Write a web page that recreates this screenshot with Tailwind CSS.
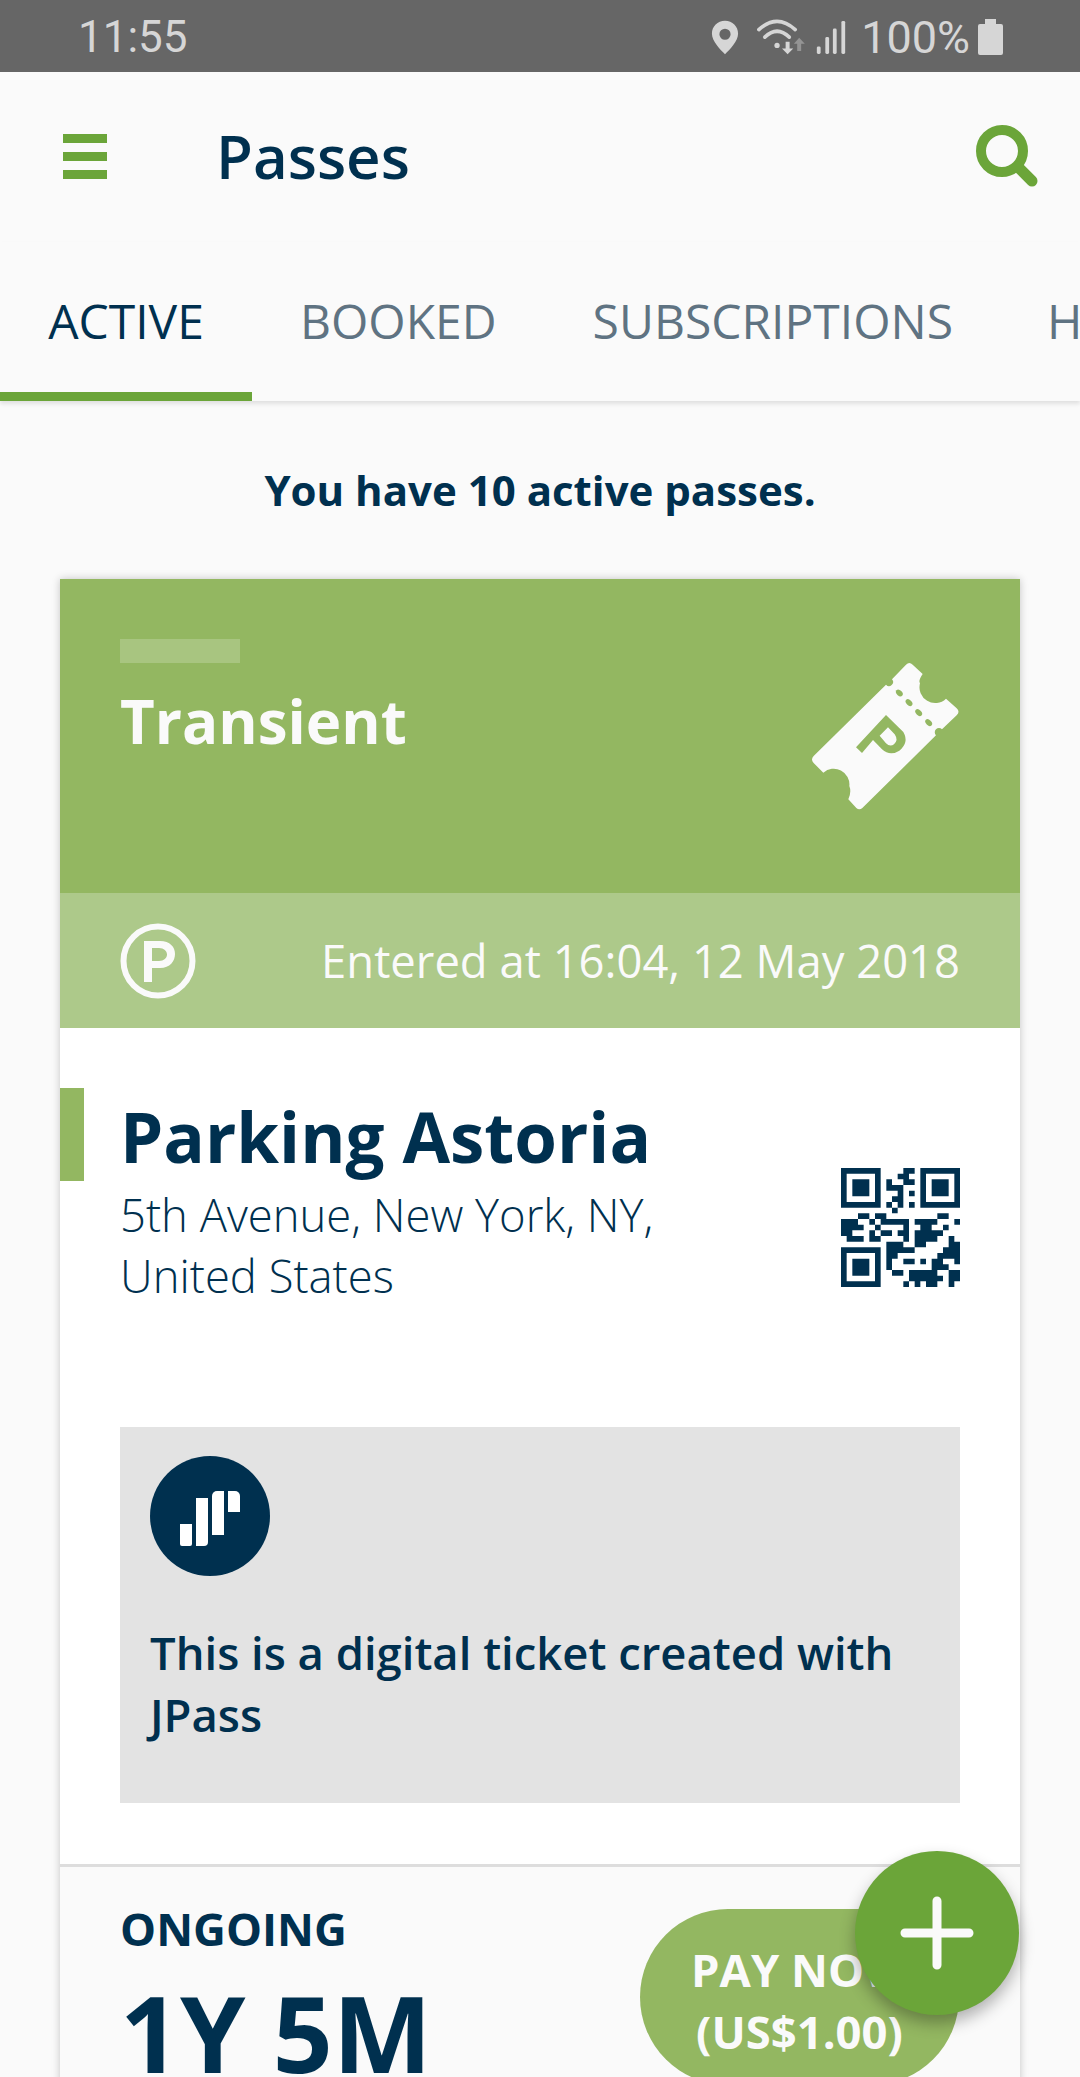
<!DOCTYPE html>
<html lang="en">
<head>
    <meta charset="UTF-8">
    <meta name="viewport" content="width=device-width, initial-scale=1.0">
    <title>Passes</title>
    <script src="https://cdn.jsdelivr.net/npm/@tailwindcss/browser@4"></script>
</head>
<body class="relative h-[2077px] w-[1080px] overflow-hidden bg-[#fafafa] font-['Open_Sans',sans-serif] text-[#00304f]">
    <!-- status bar -->
    <div class="flex h-[72px] items-center justify-between bg-[#666666] pl-[78px] pr-[77px] pt-[2px] font-['Roboto',sans-serif] text-[#d6d6d6]">
        <span class="text-[44px] font-normal leading-none">11:55</span>
        <div class="flex items-center">
            <svg width="28" height="35" viewBox="0 0 30 36" class="mr-[18px]">
                <path fill-rule="evenodd" fill="#d6d6d6" d="M15 0C7 0 1 6 1 14c0 8 9 17 14 22 5-5 14-14 14-22C29 6 23 0 15 0zm0 8.500a6 6 0 1 1 0 12 6 6 0 0 1 0-12z"/>
            </svg>
            <svg width="50" height="38" viewBox="235 50 150 115" class="mr-[8px]">
                <g fill="none" stroke="#d6d6d6" stroke-width="11" stroke-linecap="round">
                    <path d="M240 85Q295 35 350 85"/>
                    <path d="M258 108Q295 72 332 108"/>
                </g>
                <circle cx="295" cy="133" r="8" fill="#d6d6d6"/>
                <path d="M321 122h12v20h11l-17 18-17-18h11z" fill="#d6d6d6"/>
                <path d="M356 150v-22h-10l16-18 17 18h-11v22z" fill="#949494"/>
            </svg>
            <svg width="32" height="34" viewBox="0 0 32 36" class="mr-[14px]">
                <rect x="1" y="28" width="4" height="8" rx="1.500" fill="#d6d6d6"/>
                <rect x="10" y="18" width="4" height="18" rx="1.500" fill="#d6d6d6"/>
                <rect x="18" y="9" width="4" height="27" rx="1.500" fill="#d6d6d6"/>
                <rect x="27" y="1" width="4" height="35" rx="1.500" fill="#d6d6d6"/>
            </svg>
            <span class="text-[45px] font-normal leading-none">100%</span>
            <svg width="25" height="36" viewBox="0 0 25 36" class="ml-[8px]">
                <path d="M7 0h11v5h5a2 2 0 0 1 2 2v27a2 2 0 0 1-2 2H2a2 2 0 0 1-2-2V7a2 2 0 0 1 2-2h5z" fill="#d6d6d6"/>
            </svg>
        </div>
    </div>

    <!-- toolbar -->
    <header class="flex h-[170px] items-center pb-[2px] pl-[63px] pr-[42px]">
        <div class="flex w-[44px] flex-col gap-[9px]">
            <div class="h-[9px] bg-[#6ba539]"></div>
            <div class="h-[9px] bg-[#6ba539]"></div>
            <div class="h-[9px] bg-[#6ba539]"></div>
        </div>
        <h1 class="ml-[109px] text-[60px] font-semibold leading-none">Passes</h1>
        <svg width="62" height="62" viewBox="0 0 62 62" class="ml-auto">
            <circle cx="26" cy="26" r="21" fill="none" stroke="#6ba539" stroke-width="10"/>
            <path d="M42 42L56 56" stroke="#6ba539" stroke-width="11" stroke-linecap="round"/>
        </svg>
    </header>

    <!-- tabs -->
    <nav class="relative flex h-[159px] overflow-hidden bg-[#fafafa] text-[48px] leading-none text-[#5f7382] shadow-[0_3px_4px_rgba(0,0,0,0.1)]">
        <div class="flex w-[252px] shrink-0 items-center justify-center border-b-[9px] border-[#6ba539] pt-[8px] text-[#00304f]">ACTIVE</div>
        <div class="ml-[48px] flex shrink-0 items-center pb-[1px]">BOOKED</div>
        <div class="ml-[96px] flex shrink-0 items-center pb-[1px]">SUBSCRIPTIONS</div>
        <div class="ml-[94px] flex shrink-0 items-center pb-[1px]">HISTORY</div>
    </nav>

    <p class="pt-[62px] text-center text-[42px] font-bold leading-[54px]">You have 10 active passes.</p>

    <!-- pass card -->
    <main class="mx-[60px] mt-[62px] bg-white shadow-[0_0_8px_rgba(0,0,0,0.22)]">
        <section class="flex h-[314px] justify-between bg-[#93b761] pl-[60px] pr-[60px] pt-[60px] text-[#fafafa]">
            <div>
                <div class="h-[24px] w-[120px] bg-white/20"></div>
                <h2 class="mt-[18px] text-[60px] font-bold leading-[80px]">Transient</h2>
            </div>
            <svg width="150" height="150" viewBox="90 60 450 450" class="mt-[21px]">
                <path fill="#fafafa" d="M378 74Q388 64 398 74L428 102Q414 122 420 130A47 47 0 0 0 498 176L530 205Q541 215 530 226L486 268A11 11 0 0 0 468 286L247 504Q238 512 229 504L205 478Q215 456 208 438A47 47 0 0 0 130 398L101 369Q91 358 101 348L318 134A11 11 0 0 0 336 118z"/>
                <g fill="#93b761">
                    <ellipse cx="358" cy="159" rx="12" ry="8" transform="rotate(45 358 159)"/>
                    <ellipse cx="387" cy="188" rx="12" ry="8" transform="rotate(45 387 188)"/>
                    <ellipse cx="416" cy="218" rx="12" ry="8" transform="rotate(45 416 218)"/>
                    <ellipse cx="446" cy="248" rx="12" ry="8" transform="rotate(45 446 248)"/>
                    <path fill-rule="evenodd" d="M228 322L318 225L370 276Q388 308 358 332Q330 350 306 328L279 300L246 339zM299 287L324 262L344 283Q356 300 342 313Q330 322 318 310z"/>
                </g>
            </svg>
        </section>
        <section class="flex h-[135px] items-center justify-between bg-[#adc98a] pl-[60px] pr-[60px] text-[#fafafa]">
            <svg width="76" height="76" viewBox="0 0 76 76">
                <circle cx="38" cy="38" r="34.500" fill="none" stroke="#fafafa" stroke-width="6"/>
                <path fill="#fafafa" fill-rule="evenodd" d="M24 18h16c10 0 15 6 15 13s-5 14-15 14h-8v14h-8zm8 7v13h7c5 0 8-3 8-6.500S44 25 39 25z"/>
            </svg>
            <span class="text-[45.400px] font-normal leading-none">Entered at 16:04, 12 May 2018</span>
        </section>

        <section class="relative h-[399px] pl-[60px] pr-[60px] pt-[64px]">
            <div class="absolute left-0 top-[60px] h-[93px] w-[24px] bg-[#93b761]"></div>
            <div class="flex justify-between">
                <div>
                    <h3 class="text-[69px] font-bold leading-[88px]">Parking Astoria</h3>
                    <p class="mt-[4px] text-[45.400px] font-light leading-[61px]">5th Avenue, New York, NY,<br>United States</p>
                </div>
                <svg width="119" height="119" viewBox="0 0 21 21" class="mt-[76px]" fill="#00304f">
                    <path fill-rule="evenodd" d="M0 0h7v7H0zM1 1v5h5V1zM2 2h3v3H2zM14 0h7v7h-7zM15 1v5h5V1zM16 2h3v3h-3zM0 14h7v7H0zM1 15v5h5v-5zM2 16h3v3H2z"/>
                    <path d="M11 0h2v1h-2zM10 1h2v1h-2zM8 2h1v1H8zM11 2h2v1h-2zM8 3h3v1H8zM10 4h1v1h-1zM12 4h1v1h-1zM9 5h2v1H9zM8 6h1v1H8zM10 6h1v1h-1zM12 6h1v1h-1zM9 7h1v1H9zM3 8h2v1H3zM6 8h2v1H6zM17 8h2v1h-2zM0 9h3v1H0zM5 9h1v1H5zM7 9h5v1H7zM13 9h4v1h-4zM20 9h1v1h-1zM0 10h4v1H0zM6 10h1v1H6zM11 10h1v1h-1zM14 10h2v1h-2zM18 10h1v1h-1zM0 11h2v1H0zM5 11h1v1H5zM7 11h2v1H7zM10 11h2v1h-2zM13 11h5v1h-5zM1 12h3v1H1zM5 12h2v1H5zM11 12h1v1h-1zM13 12h4v1h-4zM19 12h1v1h-1zM8 13h3v1H8zM13 13h2v1h-2zM19 13h2v1h-2zM8 14h5v1H8zM18 14h3v1h-3zM8 15h2v1H8zM17 15h4v1h-4zM8 16h1v1H8zM11 16h2v1h-2zM14 16h1v1h-1zM16 16h2v1h-2zM20 16h1v1h-1zM8 17h1v1H8zM16 17h3v1h-3zM9 18h2v1H9zM12 18h5v1h-5zM19 18h2v1h-2zM12 19h6v1h-6zM19 19h2v1h-2zM11 20h1v1h-1zM13 20h1v1h-1zM15 20h2v1h-2zM19 20h1v1h-1z"/>
                </svg>
            </div>
        </section>

        <section class="mx-[60px] h-[376px] bg-[#e3e3e3] px-[30px] pt-[29px]">
            <svg width="120" height="120" viewBox="0 0 120 120">
                <circle cx="60" cy="60" r="60" fill="#00304f"/>
                <g fill="#ffffff">
                    <path d="M30 68h12v20a2 2 0 0 1-2 2h-8a2 2 0 0 1-2-2z"/>
                    <path d="M46 42h12v44a4 4 0 0 1-4 4h-8z"/>
                    <path d="M62 40a5 5 0 0 1 5-5h7v44H62z"/>
                    <path d="M78 35h7a5 5 0 0 1 5 5v16H78z"/>
                </g>
            </svg>
            <p class="mt-[45px] text-[45.400px] font-semibold leading-[62px]">This is a digital ticket created with JPass</p>
        </section>

        <div class="mt-[61px] h-[3px] bg-[#dddddd]"></div>

        <section class="flex h-[400px] justify-between bg-[#fafafa] pl-[60px] pr-[61px] pt-[31px]">
            <div>
                <p class="text-[45.400px] font-bold leading-[60px]">ONGOING</p>
                <p class="mt-[20px] text-[105px] font-bold leading-[110px]">1Y 5M</p>
            </div>
            <div class="mt-[11px] flex h-[176px] w-[319px] items-center justify-center rounded-full bg-[#93b761] pt-[5px] text-center text-[45.400px] font-bold leading-[62px] text-[#fafafa]">PAY NOW<br>(US$1.00)</div>
        </section>
    </main>

    <!-- add button -->
    <button class="absolute left-[855px] top-[1851px] flex size-[164px] items-center justify-center rounded-full bg-[#6ba539] shadow-[0_8px_16px_rgba(0,0,0,0.3)]">
        <svg width="74" height="74" viewBox="0 0 74 74">
            <path d="M37 5V69M5 37H69" stroke="#fafafa" stroke-width="9" stroke-linecap="round"/>
        </svg>
    </button>
</body>
</html>
